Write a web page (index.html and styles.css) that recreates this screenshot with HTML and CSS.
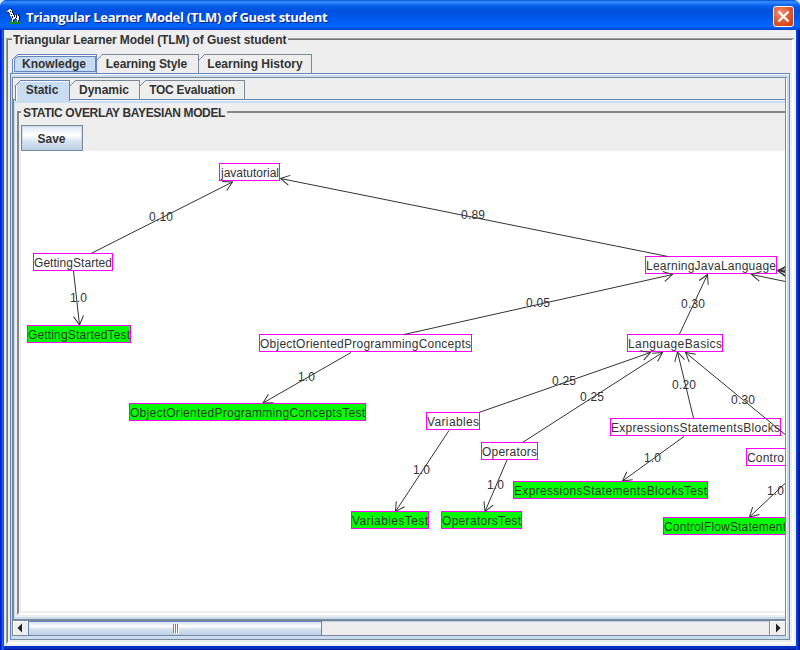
FILE: index.html
```html
<!DOCTYPE html>
<html lang="en">
<head>
<meta charset="utf-8">
<title>Triangular Learner Model (TLM) of Guest student</title>
<link rel="stylesheet" href="styles.css">
</head>
<body>
<div class="window">
  <header class="titlebar">
    <svg class="app-icon" width="14" height="16" viewBox="0 0 14 16" shape-rendering="crispEdges">
      <path fill="#168a20" d="M3 13h10v1h1v1h-1v1H3v-1H2v-1h1z"/>
      <path fill="#fff" d="M1 2h2v1h2v2h1v2h6v4h-1v3h-1v-3H6v3H5v-4H4V7H3V5H1V4H0V3h1z"/>
      <path fill="#fff" d="M2 1h3v2H2zM3 5h3v3H3zM5 10h3v1H5zM10 10h2v3h-2z"/>
      <path fill="#111" d="M2 0h1v1H2zM4 0h1v2H4zM0 4h2v1H0zM3 3h1v1H3zM5 3h1v2H5zM6 5h1v2H6zM4 6h1v1H4zM5 8h1v2H5zM7 7h1v2H7zM9 7h1v3H9zM11 6h1v2h-1zM12 8h1v4h-1zM6 12h1v2H6zM11 12h1v2h-1zM4 10h1v1H4zM8 10h1v1H8z"/>
    </svg>
    <span class="title">Triangular Learner Model (TLM) of Guest student</span>
    <button class="close" aria-label="Close">
      <svg width="19" height="19" viewBox="0 0 19 19"><path d="M4.500 4.500l10 10M14.500 4.500l-10 10" stroke="#fff" stroke-width="2.300"/></svg>
    </button>
  </header>
  <main class="client">
    <section class="group outer-group">
      <h1 class="legend">Triangular Learner Model (TLM) of Guest student</h1>
      <nav class="tabs outer-tabs">
        <span class="tab selected t-knowledge">Knowledge</span><span class="tab t-style">Learning Style</span><span class="tab t-history">Learning History</span>
      </nav>
      <div class="outer-pane">
        <div class="scroll">
          <div class="viewport">
            <nav class="tabs inner-tabs">
              <span class="tab selected t-static">Static</span><span class="tab t-dynamic">Dynamic</span><span class="tab t-toc">TOC Evaluation</span>
            </nav>
            <div class="inner-pane">
              <section class="group inner-group">
                <h2 class="legend">STATIC OVERLAY BAYESIAN MODEL</h2>
                <button class="save">Save</button>
                <svg class="graph" width="764" height="460" viewBox="21 151 764 460">
                  <defs>
                    <marker id="arrow" markerUnits="userSpaceOnUse" markerWidth="12" markerHeight="12" refX="10" refY="6" orient="auto">
                      <path d="M1 1L10 6L1 11" fill="none" stroke="#333" stroke-width="1"/>
                    </marker>
                  </defs>
                  <g class="nodes">
                    <rect x="219.5" y="163.5" width="60" height="17"/>
                    <rect x="33.5" y="253.5" width="79" height="17"/>
                    <rect class="test" x="27.5" y="325.5" width="103" height="17"/>
                    <rect x="259.5" y="334.5" width="212" height="17"/>
                    <rect class="test" x="129.5" y="403.5" width="236" height="17"/>
                    <rect x="645.5" y="256.5" width="131" height="17"/>
                    <rect x="627.5" y="334.5" width="95" height="17"/>
                    <rect x="426.5" y="412.5" width="53" height="17"/>
                    <rect x="481.5" y="442.5" width="56" height="17"/>
                    <rect class="test" x="351.5" y="511.5" width="77" height="17"/>
                    <rect class="test" x="441.5" y="511.5" width="80" height="17"/>
                    <rect x="610.5" y="418.5" width="170" height="17"/>
                    <rect class="test" x="513.5" y="481.5" width="194" height="17"/>
                    <rect x="746.5" y="448.5" width="130" height="17"/>
                    <rect class="test" x="663.5" y="517.5" width="160" height="17"/>
                  </g>
                  <g class="edges">
                    <path d="M91 253.5L232.500 182"/>
                    <path d="M668 256.500L280.500 178.500"/>
                    <path d="M404 334.500L672.500 274.500"/>
                    <path d="M351 352.500L263 403"/>
                    <path d="M73.500 271L79.500 325"/>
                    <path d="M679.500 334L707.500 274.500"/>
                    <path d="M479 412.500L650.500 352.500"/>
                    <path d="M522.500 442.500L662.500 352.500"/>
                    <path d="M693.500 418L677.500 352"/>
                    <path d="M790 438.500L685.500 352.500"/>
                    <path d="M795 283.500L751.500 274.500"/>
                    <path d="M449 430.500L395.500 511.500"/>
                    <path d="M507 460L485 511.500"/>
                    <path d="M684 436.500L622.500 481"/>
                    <path d="M786 482.500L749.500 517"/>
                    <path d="M800 272L777.500 270.500"/>
                    <path d="M800 274L777.500 270.500"/>
                    <path d="M800 268L779.500 270.500"/>
                  </g>
                  <g class="names">
                    <text x="221" y="177" textLength="58">javatutorial</text>
                    <text x="34" y="267" textLength="78">GettingStarted</text>
                    <text x="28" y="339" textLength="102">GettingStartedTest</text>
                    <text x="260" y="348" textLength="211">ObjectOrientedProgrammingConcepts</text>
                    <text x="130" y="417" textLength="235">ObjectOrientedProgrammingConceptsTest</text>
                    <text x="646" y="270" textLength="130">LearningJavaLanguage</text>
                    <text x="628" y="348" textLength="94">LanguageBasics</text>
                    <text x="427" y="426" textLength="52">Variables</text>
                    <text x="482" y="456" textLength="55">Operators</text>
                    <text x="352" y="525" textLength="76">VariablesTest</text>
                    <text x="442" y="525" textLength="79">OperatorsTest</text>
                    <text x="611" y="432" textLength="169">ExpressionsStatementsBlocks</text>
                    <text x="514" y="495" textLength="193">ExpressionsStatementsBlocksTest</text>
                    <text x="747" y="462" textLength="37">Contro</text>
                    <text x="664" y="531" textLength="122">ControlFlowStatement</text>
                  </g>
                  <g class="weights">
                    <text x="149" y="221" textLength="24">0.10</text>
                    <text x="461" y="219" textLength="24">0.89</text>
                    <text x="526" y="307" textLength="24">0.05</text>
                    <text x="681" y="308" textLength="24">0.30</text>
                    <text x="70" y="302" textLength="17">1.0</text>
                    <text x="298" y="381" textLength="17">1.0</text>
                    <text x="552" y="385" textLength="24">0.25</text>
                    <text x="580" y="401" textLength="24">0.25</text>
                    <text x="672" y="389" textLength="24">0.20</text>
                    <text x="731" y="404" textLength="24">0.30</text>
                    <text x="413" y="474" textLength="17">1.0</text>
                    <text x="487" y="489" textLength="17">1.0</text>
                    <text x="644" y="462" textLength="17">1.0</text>
                    <text x="767" y="495" textLength="17">1.0</text>
                  </g>
                </svg>
              </section>
            </div>
          </div>
          <div class="scrollbar">
            <span class="arrow-box left"><svg width="14" height="14" viewBox="0 0 14 14"><path d="M4.500 7l4.500-4.500v9z" fill="#222"/></svg></span>
            <span class="thumb"><i></i><i></i><i></i></span>
            <span class="track"></span>
            <span class="arrow-box right"><svg width="14" height="14" viewBox="0 0 14 14"><path d="M10.500 7L6 2.500v9z" fill="#222"/></svg></span>
          </div>
        </div>
      </div>
    </section>
  </main>
</div>
</body>
</html>
```
FILE: styles.css
```css
* { box-sizing: border-box; }
body {
  margin: 0;
  background: #d8e4f8;
  color: #333;
  font: bold 12px/14px "Liberation Sans", Arial, sans-serif;
  overflow: hidden;
}
.window {
  width: 800px;
  height: 650px;
  display: flex;
  flex-direction: column;
  border-radius: 7px 7px 0 0;
  overflow: hidden;
  background: linear-gradient(to right, #0019cf 0 1px, #0831d9 1px 2px, #166aee 2px 3px, #0855dd 3px 4px, #0046e0 4px 797px, #0034d4 797px 798px, #001ea0 798px 799px, #00138c 799px);
}
.titlebar {
  height: 30px;
  flex: none;
  display: flex;
  align-items: center;
  padding: 3px 6px 0 7px;
  background: linear-gradient(#0050d8 0, #3b93ff 2px, #1b72f5 4px, #0058e6 7px, #0050dc 12px, #0059ef 19px, #0066ff 25px, #0060f8 27px, #0040cc 30px);
}
.app-icon { margin: -2px 5px 0 0; }
.title {
  flex: 1;
  color: #fff;
  font: bold 13px/16px "Open Sans", sans-serif;
  letter-spacing: -.32px;
  text-shadow: 1px 1px 0 #0a1e78;
  white-space: nowrap;
}
.close {
  width: 21px;
  height: 21px;
  padding: 0;
  border: 1px solid #fff;
  border-radius: 3px;
  background: radial-gradient(circle at 35% 30%, #f0906e, #e0532c 55%, #c8380f);
}
.close svg { display: block; }
.client {
  flex: 1;
  margin: 0 4px 4px;
  padding: 8px 2px 2px;
  background: #eee;
  box-shadow: 0 3px 0 #0030c8, 0 4px 0 #00138c;
}
.group {
  position: relative;
  border: 2px solid;
  border-color: #777 #fff #fff #777;
}
.group::before {
  content: "";
  position: absolute;
  inset: -2px;
  border: solid #a0a0a0;
  border-width: 1px 0 0 1px;
  pointer-events: none;
}
.outer-group {
  height: 606px;
  padding: 14px 2px 3px 2px;
}
.legend {
  position: absolute;
  left: 4px;
  top: -7px;
  margin: 0;
  padding: 0 2px 0 1px;
  background: #eee;
  font: bold 12px/14px "Liberation Sans", Arial, sans-serif;
  letter-spacing: -.1px;
  white-space: nowrap;
}
.tabs { display: flex; height: 19px; }
.outer-tabs { padding-left: 2px; }
.inner-tabs { padding-left: 2px; }
.tab {
  position: relative;
  height: 19px;
  border: solid #7a8a99;
  border-width: 1px 1px 0 0;
  text-align: center;
  line-height: 18px;
  white-space: nowrap;
}
.tab::before {
  content: "";
  position: absolute;
  left: 0;
  top: -1px;
  width: 6px;
  height: 6px;
  background: linear-gradient(135deg, #eee 42%, #7a8a99 43% 57%, transparent 58%);
}
.tab.selected {
  padding-right: 1px;
  border-color: #6382bf;
  border-left: 1px solid #6382bf;
  background: #c8ddf2;
}
.tab.selected::before {
  left: -1px;
  background: linear-gradient(135deg, #eee 42%, #6382bf 43% 57%, transparent 58%);
}
.t-knowledge {
  width: 85px;
  box-shadow: inset 1px 1px 0 #fff;
}
.t-knowledge::after {
  content: "";
  position: absolute;
  inset: 1px 0 1px 1px;
  border: 1px solid #6382bf;
  border-top-left-radius: 5px;
}
.tab.t-style { width: 102px; padding-right: 2px; letter-spacing: -.1px; }
.t-history { width: 113px; }
.t-static { width: 55px; height: 21px; margin-bottom: -2px; z-index: 1; box-shadow: inset 1px 1px 0 #fff; }
.t-dynamic { width: 70px; padding-right: 1px; }
.t-toc { width: 105px; letter-spacing: -.25px; }
.outer-pane {
  width: 780px;
  height: 567px;
  padding: 3px 3px 3px 1px;
  border: 1px solid #6382bf;
  border-right-color: #7a8a99;
  border-bottom-color: #7a8a99;
  background: #c8ddf2;
  box-shadow: inset 0 1px 0 #fff;
}
.scroll {
  width: 775px;
  height: 559px;
  display: flex;
  flex-direction: column;
  border: 1px solid #7a8a99;
  border-right: 0;
  border-bottom: 0;
  background: linear-gradient(to left, #fff 1px, #7a8a99 1px 2px, #eee 2px);
}
.viewport {
  width: 772px;
  height: 541px;
  padding-top: 2px;
  overflow: hidden;
  background: #eee;
}
.inner-pane {
  width: 900px;
  height: 520px;
  padding: 3px 0 2px 1px;
  border: solid #6382bf;
  border-width: 1px 0 0 1px;
  background: #c8ddf2;
  box-shadow: inset 0 1px 0 #fff;
}
.inner-group {
  height: 514px;
  padding: 22px 0 0 6px;
  border: 0;
  background: #eee;
}
.inner-group::before {
  inset: 8px 0 2px 2px;
  border-width: 2px 0 2px 2px;
  border-style: solid;
  border-color: #888 #fff #fff #888;
}
.inner-group .legend {
  left: 6px;
  top: 3px;
  padding-left: 2px;
  letter-spacing: -.36px;
}
.save {
  position: relative;
  display: block;
  width: 62px;
  height: 26px;
  padding: 1px 1px 0 0;
  border: 1px solid #7a8a99;
  background: linear-gradient(#dde8f3, #fff 40%, #dce7f2 60%, #b8cfe5);
  box-shadow: inset 0 0 0 1px rgba(184, 207, 229, .6);
  color: #333;
  font: bold 12px/14px "Liberation Sans", Arial, sans-serif;
}
.graph { position: relative; display: block; background: #fff; }
.graph text { font: 12px "Liberation Sans", Arial, sans-serif; fill: #333; }
.nodes rect { fill: #fff; stroke: #f0f; shape-rendering: crispEdges; }
.nodes .test { fill: #0f0; }
.edges path { fill: none; stroke: #333; marker-end: url(#arrow); }
.scrollbar {
  display: flex;
  width: 772px;
  height: 17px;
  border: solid #7a8a99;
  border-width: 2px 0 1px;
  background: #eee;
}
.arrow-box { width: 15px; height: 14px; background: #eee; box-shadow: inset 1px 1px 0 #fff; }
.arrow-box.right { width: 16px; border-left: 1px solid #7a8a99; }
.arrow-box svg { display: block; }
.thumb {
  width: 294px;
  display: flex;
  justify-content: center;
  align-items: center;
  gap: 1px;
  border: 1px solid #6382bf;
  border-bottom: 0;
  background: linear-gradient(#d6e3f0, #fff 35%, #dbe6f1 50%, #b8cfe5);
}
.thumb i { width: 1px; height: 9px; background: #6382bf; box-shadow: 1px 1px 0 #fff; }
.track { flex: 1; box-shadow: inset 0 1px 0 #b8cfe5; }
```
